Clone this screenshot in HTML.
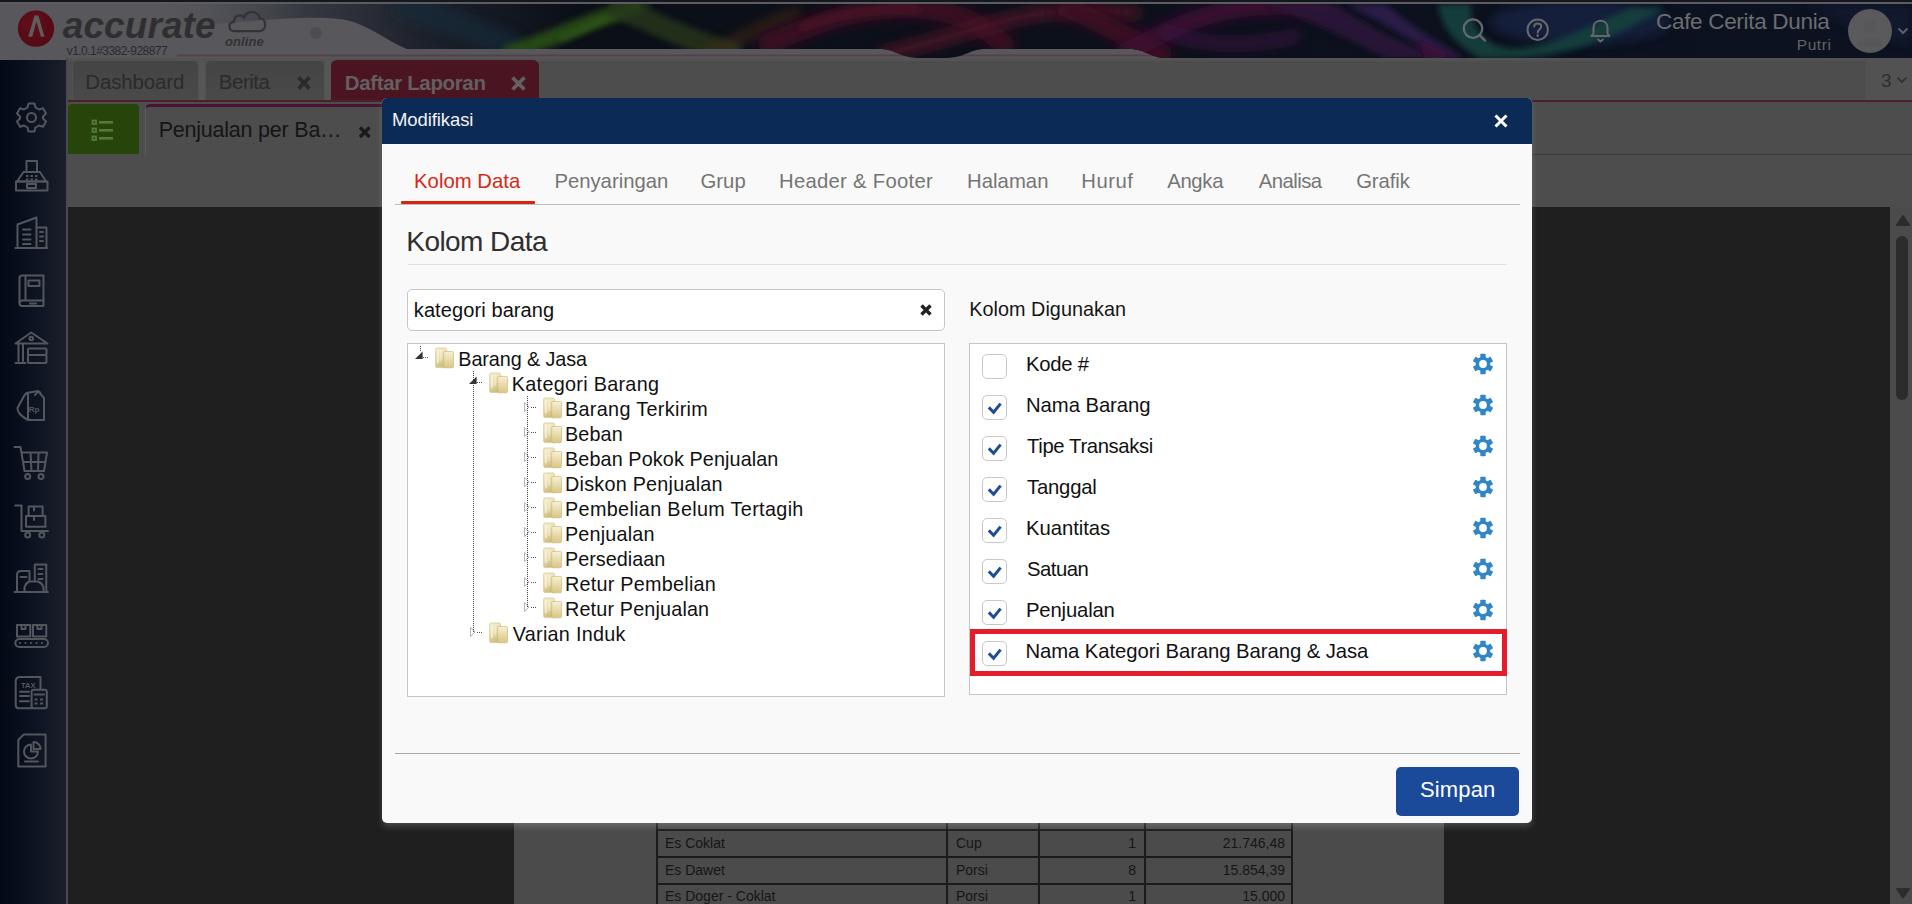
<!DOCTYPE html>
<html><head><meta charset="utf-8">
<style>
html,body{margin:0;padding:0;}
html{width:1912px;height:904px;overflow:hidden;background:#1f1f1f;}
body{width:1912px;height:904px;overflow:hidden;position:relative;background:#1f1f1f;font-family:"Liberation Sans",sans-serif;}
.a{position:absolute;}
.t{position:absolute;white-space:pre;line-height:1;}
</style></head><body>

<!-- HEADER -->
<svg class="a" style="left:0;top:0" width="1912" height="60" viewBox="0 0 1912 60">
 <defs>
  <linearGradient id="hdark" x1="0" x2="1912" y1="0" y2="0" gradientUnits="userSpaceOnUse">
   <stop offset="0.07" stop-color="#58585c" stop-opacity="0"/>
   <stop offset="0.16" stop-color="#2f323c" stop-opacity="0.85"/>
   <stop offset="0.22" stop-color="#1e222c"/>
   <stop offset="0.3" stop-color="#0b0f18"/>
   <stop offset="1" stop-color="#0c1220"/>
  </linearGradient>
  <filter id="bl3" x="-20%" y="-100%" width="140%" height="300%"><feGaussianBlur stdDeviation="3"/></filter>
  <filter id="bl6" x="-20%" y="-100%" width="140%" height="300%"><feGaussianBlur stdDeviation="6"/></filter>
  <clipPath id="hclip"><path d="M0 4 L1912 4 L1912 59 L1170 59 C1150 58 1145 49 1130 49 L985 49 C970 49 965 58 945 58 L920 58 C900 58 895 49 880 49 L407 49 C385 40 365 22 340 19 C300 15 250 22 160 28 L0 30Z"/></clipPath>
 </defs>
 <rect x="0" y="0" width="1912" height="60" fill="#4c4c4c"/>
 <rect x="0" y="0" width="1912" height="2" fill="#16161d"/>
 <rect x="0" y="2" width="1912" height="2" fill="#5c5c63"/>
 <rect x="0" y="4" width="1912" height="54" fill="#58585c"/>
 <rect x="0" y="56" width="66" height="4" fill="#58585c"/>
 <path d="M177 55.5 L1912 55.5" stroke="#55404a" stroke-width="2"/>
 <path d="M0 4 L1912 4 L1912 59 L1170 59 C1150 58 1145 49 1130 49 L985 49 C970 49 965 58 945 58 L920 58 C900 58 895 49 880 49 L407 49 C385 40 365 22 340 19 C300 15 250 22 160 28 L0 30Z" fill="url(#hdark)"/>
 <g clip-path="url(#hclip)">
  <!-- green wave -->
  <path d="M395 4 C430 12 470 30 520 50" stroke="#132a38" stroke-width="26" fill="none" filter="url(#bl6)" opacity="0.7"/>
  <path d="M505 54 C545 44 580 22 640 6" stroke="#294d17" stroke-width="16" fill="none" filter="url(#bl3)" opacity="0.9"/>
  <path d="M560 40 C590 28 610 14 650 5" stroke="#3a6a1c" stroke-width="4" fill="none" filter="url(#bl3)" opacity="0.7"/>
  <path d="M610 6 C650 18 690 44 740 54" stroke="#27351f" stroke-width="22" fill="none" filter="url(#bl3)" opacity="0.85"/>
  <path d="M700 58 C730 45 760 25 800 12" stroke="#4a2c16" stroke-width="10" fill="none" filter="url(#bl6)" opacity="0.7"/>
  <!-- red waves -->
  <path d="M760 48 C800 30 840 10 900 8 C960 6 990 30 1010 50" stroke="#3e0f22" stroke-width="20" fill="none" filter="url(#bl6)"/>
  <path d="M800 28 C840 12 880 8 920 10" stroke="#4e1428" stroke-width="6" fill="none" filter="url(#bl3)" opacity="0.9"/>
  <path d="M880 55 C930 45 980 25 1030 15 C1080 8 1110 10 1140 14" stroke="#4a1226" stroke-width="14" fill="none" filter="url(#bl6)" opacity="0.95"/>
  <path d="M1060 5 C1100 20 1130 40 1170 58" stroke="#3c0e22" stroke-width="20" fill="none" filter="url(#bl6)"/>
  <path d="M1120 55 C1160 35 1200 10 1260 6 C1290 4 1310 8 1330 12" stroke="#3e1030" stroke-width="18" fill="none" filter="url(#bl6)"/>
  <path d="M1160 30 C1200 45 1240 50 1300 35" stroke="#3a1240" stroke-width="10" fill="none" filter="url(#bl6)" opacity="0.9"/>
  <path d="M1265 4 L1335 4 C1360 20 1390 40 1445 58 L1385 58 C1350 40 1310 20 1265 4Z" fill="#2a1838" filter="url(#bl3)" opacity="0.95"/>
  <path d="M1345 4 L1385 4 C1410 25 1440 45 1465 58 L1440 58 C1410 40 1380 20 1345 4Z" fill="#2c1b46" filter="url(#bl3)"/>
  <path d="M1418 40 L1455 58 L1425 58Z" fill="#3e1034" filter="url(#bl3)"/>
  <ellipse cx="1580" cy="22" rx="90" ry="22" fill="#132040" filter="url(#bl6)" opacity="0.9"/>
  <path d="M1438 4 L1472 4 C1468 20 1480 42 1505 48 C1540 52 1580 30 1630 8 L1665 8 C1620 35 1570 58 1510 58 L1480 58 C1455 45 1440 25 1438 4Z" fill="#173f3e" filter="url(#bl3)" opacity="0.95"/>
  <path d="M1800 4 C1840 20 1880 40 1912 45 L1912 4Z" fill="#141c34" filter="url(#bl6)" opacity="0.7"/>
 </g>
</svg>
<!-- grey tab area -->
<div class="a" style="left:66px;top:58px;width:1846px;height:149px;background:#4c4c4c"></div>
<!-- sidebar -->
<div class="a" style="left:0;top:60px;width:66px;height:844px;background:linear-gradient(90deg,#030915 0%,#0d1422 55%,#1b1f2b 100%)"></div>
<div class="a" style="left:66px;top:58px;width:2px;height:846px;background:#4a4a4c"></div>



<!-- SIDEBAR ICONS -->
<svg class="a" style="left:0;top:90px" width="66" height="700" viewBox="0 90 66 700">
 <g fill="none" stroke="#53575d" stroke-width="2" stroke-linejoin="round" stroke-linecap="round">
  <!-- gear -->
  <path d="M28.5 103.5 L34.5 103.5 L35.5 107.5 L39 109.5 L43 108.3 L46 113.5 L43 116.5 L43 118.5 L46 121.5 L43 126.7 L39 125.5 L35.5 127.5 L34.5 131.5 L28.5 131.5 L27.5 127.5 L24 125.5 L20 126.7 L17 121.5 L20 118.5 L20 116.5 L17 113.5 L20 108.3 L24 109.5 L27.5 107.5Z"/>
  <circle cx="31.5" cy="117.5" r="4.5"/>
  <!-- cash register -->
  <rect x="26.5" y="161" width="10.5" height="11"/>
  <path d="M23.5 172 L40 172 L46 181.5 L17 181.5Z"/>
  <rect x="16" y="181.5" width="31.5" height="9"/>
  <rect x="27" y="184" width="9" height="4"/>
  <!-- building -->
  <path d="M15.5 248 L47 248"/>
  <path d="M17.5 248 L17.5 224.5 L36.5 217.5 L36.5 248"/>
  <path d="M36.5 227.5 L46.5 227.5 L46.5 248"/>
  <path d="M23 229.5 L30.5 229.5 M23 234.5 L30.5 234.5 M23 239.5 L30.5 239.5 M23 244 L30.5 244 M40 232 L43 232 M40 236.5 L43 236.5 M40 241 L43 241"/>
  <!-- book -->
  <path d="M22 275.5 L43.5 275.5 L43.5 306 L22 306 Q19.5 306 19.5 303 L19.5 278 Q19.5 275.5 22 275.5Z"/>
  <path d="M25.5 275.5 L25.5 300.5 L43.5 300.5 M19.5 303 Q19.5 300.5 22 300.5 L25.5 300.5"/>
  <rect x="28.5" y="280.5" width="11" height="5.5"/>
  <path d="M30 303.5 L36 303.5"/>
  <!-- bank -->
  <path d="M15.5 343.5 L31.2 332.5 L47.5 343.5Z"/>
  <circle cx="31.2" cy="338.5" r="1.8"/>
  <path d="M18.5 344 L18.5 361 M23 344 L23 361 M15.5 363 L25.5 363"/>
  <rect x="28" y="348.5" width="18.5" height="6.5" rx="1"/>
  <rect x="28" y="355" width="18.5" height="8" rx="1"/>
  <!-- tag Rp -->
  <path d="M26.5 393 L38 391 L44 398 L44 420 L28 420 Q17 414 17.5 408 L24 396Z"/>
  <path d="M28 394 L28 420"/>
  <path d="M35 395 Q39 389 41 394"/>
  <!-- cart -->
  <path d="M14.5 447 L20.5 447 L24.5 471 L44 471 M21.5 452.5 L47 452.5 L44 471 M22.8 462 L45.5 462 M30.5 452.5 L31.5 471 M38.5 452.5 L38 471"/>
  <circle cx="27.7" cy="476.5" r="2.5"/>
  <circle cx="41" cy="476.5" r="2.5"/>
  <!-- trolley -->
  <path d="M15.3 505.5 L21.5 505.5 L21.5 531 L48 531"/>
  <circle cx="27.7" cy="535" r="2.5"/><circle cx="41.8" cy="535" r="2.5"/>
  <rect x="28.6" y="506.5" width="14" height="9.5"/>
  <rect x="26" y="516" width="19.4" height="10.8"/>
  <path d="M34 506.5 L34 510.5 M34 516 L34 520"/>
  <!-- factory -->
  <path d="M14.5 592 L48 592"/>
  <path d="M17 592 L17 575 Q17 571 21 571 L29.5 571 L29.5 580"/>
  <path d="M34.8 580 L34.8 564.5 L46.3 564.5 L46.3 592"/>
  <path d="M20.5 577 L26.5 577 M38.5 569 L42.5 569 M38.5 574 L42.5 574 M38.5 579 L42.5 579"/>
  <path d="M24.5 592 L24.5 587 Q26 583 29 581.5 L38 581.5 Q42 583 43.5 587 L43.5 592"/>
  <!-- conveyor -->
  <rect x="17" y="625" width="13.3" height="11.5"/>
  <rect x="33" y="625" width="13.3" height="11.5"/>
  <path d="M21.5 625 L21.5 629 L25.5 629 L25.5 625 M37.5 625 L37.5 629 L41.5 629 L41.5 625"/>
  <rect x="15.3" y="639" width="32.7" height="8" rx="4"/>
  <!-- tax -->
  <path d="M20 677 L40.5 677 L40.5 689 M31.6 708.2 L19 708.2 Q15.7 708.2 15.7 705 L15.7 681.5 Q15.7 677 20 677"/>
  <path d="M20 691.7 L29 691.7 M20 696 L29 696 M20 701.2 L29 701.2"/>
  <rect x="31.6" y="689.8" width="15.2" height="18.4" rx="2"/>
  <path d="M34.5 694.5 L44 694.5"/>
  <!-- report -->
  <path d="M23.5 734.6 L45.6 734.6 L45.6 766.6 L18.3 766.6 L18.3 740Z"/>
  <path d="M31 744.5 A7 7 0 1 0 38 751.5 L31 751.5Z"/>
  <path d="M33.5 742 L33.5 749 L40.5 749 A7 7 0 0 0 33.5 742Z"/>
  <path d="M25 761.6 L38 761.6"/>
 </g>
 <g fill="#53575d">
  <rect x="26" y="175" width="2.4" height="2"/><rect x="30.5" y="175" width="2.4" height="2"/><rect x="35" y="175" width="2.4" height="2"/>
  <rect x="26" y="178.5" width="2.4" height="2"/><rect x="30.5" y="178.5" width="2.4" height="2"/><rect x="35" y="178.5" width="2.4" height="2"/>
  <circle cx="20" cy="643" r="1.1"/><circle cx="25.5" cy="643" r="1.1"/><circle cx="31" cy="643" r="1.1"/><circle cx="36.5" cy="643" r="1.1"/><circle cx="42" cy="643" r="1.1"/>
  <rect x="34.5" y="698.5" width="3" height="2"/><rect x="40" y="698.5" width="3" height="2"/><rect x="34.5" y="702.5" width="3" height="2"/><rect x="40" y="702.5" width="3" height="2"/>
 </g>
 <text x="28.7" y="411.5" font-family="Liberation Sans" font-weight="700" font-size="8" fill="#53575d">Rp</text>
 <text x="21" y="688" font-family="Liberation Sans" font-weight="700" font-size="7.5" fill="#53575d">TAX</text>
</svg>


<!-- LOGO -->
<svg class="a" style="left:0;top:0" width="340" height="60" viewBox="0 0 340 60">
 <defs><radialGradient id="lg" cx="0.4" cy="0.35" r="0.7"><stop offset="0" stop-color="#640e1b"/><stop offset="1" stop-color="#520a15"/></radialGradient></defs><circle cx="36" cy="28.6" r="18.2" fill="url(#lg)"/>
 <path d="M28.2 36.8 L34.6 15.6 L38.4 15.6 L44.4 36.8 L41 36.8 L36.4 21.5 L32.2 36.8Z" fill="#5e5e60"/>
 <path d="M9 21 C3 21 2.5 13 8.5 12.3 C8.5 6 15 4.5 18 8 C21 1 32 1.5 33 9 C40 9 40 21 33 21Z" transform="translate(225,9) scale(1.05)" fill="none" stroke="#333336" stroke-width="2.2"/>
 <ellipse cx="316" cy="33" rx="6" ry="6" fill="#4d4d50" opacity="0.9"/>
</svg>
<div class="t" style="left:62.8px;top:7.1px;font-size:37px;font-weight:700;font-style:italic;color:#2f2f31;letter-spacing:0.08px">accurate</div>
<div class="t" style="left:225.0px;top:35.3px;font-size:13px;font-weight:700;font-style:italic;color:#323234;letter-spacing:0.11px">online</div>
<div class="t" style="left:66.7px;top:44.8px;font-size:12px;color:#2a2a2c;letter-spacing:-0.54px">v1.0.1#3382-928877</div>

<!-- HEADER RIGHT -->
<svg class="a" style="left:1450px;top:10px" width="170" height="40" viewBox="1450 10 170 40">
 <g fill="none" stroke="#68686c" stroke-width="2.3" stroke-linecap="round">
 <circle cx="1473" cy="28.6" r="9.2"/>
 <path d="M1479.8 35.4 L1485 40.6"/>
 <circle cx="1537.7" cy="29.7" r="10.2" stroke-width="2"/>
 <path d="M1534.2 26.6 C1534.2 22.6 1541.2 22.6 1541.2 26.6 C1541.2 29.6 1537.7 29.6 1537.7 32.6" stroke-width="2"/>
 <path d="M1591.5 36 L1593.5 33.5 L1593.5 27.5 C1593.5 18.5 1607.5 18.5 1607.5 27.5 L1607.5 33.5 L1609.5 36Z" stroke-width="2" stroke-linejoin="round"/>
 <path d="M1598 39.5 L1600.5 41.5 L1603 39.5" stroke-width="1.8"/>
 </g>
 <circle cx="1537.7" cy="35.6" r="1.3" fill="#68686c"/>
</svg>
<svg class="a" style="left:1848px;top:9px" width="44" height="44" viewBox="0 0 44 44"><circle cx="22" cy="22" r="22" fill="#5a5a5c"/><circle cx="22" cy="17" r="6.5" fill="#575759"/><path d="M10 36 C10 26 34 26 34 36 L34 38 L10 38Z" fill="#575759"/></svg>
<svg class="a" style="left:1896px;top:26px" width="14" height="10" viewBox="0 0 14 10"><path d="M2.5 2.5 L7 7 L11.5 2.5" fill="none" stroke="#5d5f66" stroke-width="2"/></svg>
<div class="t" style="left:1656.0px;top:11.3px;font-size:22.5px;color:#6c6c70;letter-spacing:-0.31px">Cafe Cerita Dunia</div>
<div class="t" style="left:1796.8px;top:36.5px;font-size:15.5px;color:#636366;letter-spacing:0.54px">Putri</div>

<!-- TABS ROW -->
<div class="a" style="left:68px;top:58px;width:1844px;height:42px;background:#4d4d4d"></div>
<div class="a" style="left:199px;top:60px;width:6px;height:40px;background:#565656"></div><div class="a" style="left:325px;top:60px;width:6px;height:40px;background:#565656"></div><div class="a" style="left:68px;top:58px;width:1798px;height:3px;background:#535353"></div>
<div class="a" style="left:72px;top:60px;width:127px;height:41px;background:linear-gradient(#444,#4a4a4a);border:1px solid #525252;border-bottom:none;border-radius:6px 6px 0 0;box-sizing:border-box"></div>
<div class="a" style="left:205px;top:60px;width:120px;height:41px;background:linear-gradient(#444,#4a4a4a);border:1px solid #525252;border-bottom:none;border-radius:6px 6px 0 0;box-sizing:border-box"></div>
<div class="a" style="left:331px;top:60px;width:208px;height:41px;background:#4a1420;border-radius:6px 6px 0 0"></div>
<svg class="a" style="left:290px;top:70px" width="240" height="24" viewBox="290 70 240 24">
 <path d="M298.5 77.5 L309.5 88.5 M309.5 77.5 L298.5 88.5" stroke="#2a2a2a" stroke-width="3.6"/>
 <path d="M512.5 77.5 L524.5 89.5 M524.5 77.5 L512.5 89.5" stroke="#646062" stroke-width="3.8"/>
</svg>
<div class="a" style="left:68px;top:100px;width:1844px;height:2px;background:#4b2029"></div>
<div class="a" style="left:1866px;top:58px;width:46px;height:42px;background:#525252"></div>
<svg class="a" style="left:1896px;top:76px" width="12" height="8" viewBox="0 0 12 8"><path d="M1.5 1.5 L6 6 L10.5 1.5" fill="none" stroke="#2e2e2e" stroke-width="1.6"/></svg>
<div class="t" style="left:85.3px;top:71.6px;font-size:20.5px;color:#2b2b2b;letter-spacing:-0.15px">Dashboard</div>
<div class="t" style="left:218.8px;top:71.6px;font-size:20.5px;color:#2b2b2b;letter-spacing:-0.47px">Berita</div>
<div class="t" style="left:344.7px;top:72.5px;font-size:20.5px;font-weight:700;color:#645f61;letter-spacing:-0.35px">Daftar Laporan</div>
<div class="t" style="left:1881.0px;top:70.9px;font-size:19px;color:#2e2e2e">3</div>

<!-- second row -->
<div class="a" style="left:68px;top:102px;width:1844px;height:105px;background:#4d4d4d"></div>
<div class="a" style="left:68px;top:104px;width:71px;height:50px;background:#27450b;border-radius:4px 4px 0 0"></div>
<svg class="a" style="left:90px;top:117px" width="28" height="26" viewBox="0 0 28 26">
 <g fill="none" stroke="#557a38" stroke-width="1.8">
 <rect x="2.5" y="3.5" width="3.5" height="3.5"/><rect x="2.5" y="11.5" width="3.5" height="3.5"/><rect x="2.5" y="19.5" width="3.5" height="3.5"/>
 </g>
 <g fill="#557a38"><rect x="9" y="4" width="14" height="2.6"/><rect x="9" y="12" width="14" height="2.6"/><rect x="9" y="20" width="14" height="2.6"/></g>
</svg>
<div class="a" style="left:145px;top:104px;width:260px;height:51px;background:#4d4d4d;border-left:1px solid #5a5a5a;border-top:3px solid #4a1230;border-radius:5px 5px 0 0;box-sizing:border-box"></div>
<svg class="a" style="left:355px;top:122px" width="20" height="20" viewBox="355 122 20 20"><path d="M360 127.5 L369.5 137 M369.5 127.5 L360 137" stroke="#1a1a1a" stroke-width="3.2"/></svg>
<div class="a" style="left:1532px;top:154px;width:380px;height:1px;background:#3b3b3b"></div>
<div class="t" style="left:158.7px;top:119.8px;font-size:21.5px;color:#151515;letter-spacing:-0.22px">Penjualan per Ba…</div>

<!-- CONTENT -->
<div class="a" style="left:68px;top:207px;width:1822px;height:697px;background:#1f1f1f"></div>
<div class="a" style="left:514px;top:207px;width:930px;height:697px;background:#4b4b4b"></div>
<div class="a" style="left:1890px;top:207px;width:22px;height:697px;background:#4b4b4b"></div>
<svg class="a" style="left:1889px;top:210px" width="23" height="20" viewBox="1889 210 23 20"><path d="M1897 225 L1903 216 L1909 225Z" fill="#2c2c2c" stroke="#2c2c2c" stroke-width="2" stroke-linejoin="round"/></svg>
<div class="a" style="left:1896px;top:236px;width:12px;height:164px;background:#2c2c2c;border-radius:6px"></div>
<svg class="a" style="left:1889px;top:880px" width="23" height="20" viewBox="1889 880 23 20"><path d="M1897 889 L1903 897.5 L1909 889Z" fill="#2c2c2c" stroke="#2c2c2c" stroke-width="2" stroke-linejoin="round"/></svg>
<!-- TABLE -->
<div class="a" style="left:656px;top:820px;width:2px;height:84px;background:#1b1b1b"></div>
<div class="a" style="left:946px;top:820px;width:2px;height:84px;background:#1b1b1b"></div>
<div class="a" style="left:1038px;top:820px;width:2px;height:84px;background:#1b1b1b"></div>
<div class="a" style="left:1144px;top:820px;width:2px;height:84px;background:#1b1b1b"></div>
<div class="a" style="left:1291px;top:820px;width:2px;height:84px;background:#1b1b1b"></div>
<div class="a" style="left:656px;top:829px;width:637px;height:2px;background:#1b1b1b"></div>
<div class="a" style="left:656px;top:856px;width:637px;height:2px;background:#1b1b1b"></div>
<div class="a" style="left:656px;top:883px;width:637px;height:2px;background:#1b1b1b"></div>
<div class="t" style="left:665px;top:836.4px;font-size:14px;color:#151515">Es Coklat</div>
<div class="t" style="left:956px;top:836.4px;font-size:14px;color:#151515">Cup</div>
<div class="t" style="right:776px;top:836.4px;font-size:14px;color:#151515">1</div>
<div class="t" style="right:627px;top:836.4px;font-size:14px;color:#151515">21.746,48</div>
<div class="t" style="left:665px;top:862.8px;font-size:14px;color:#151515">Es Dawet</div>
<div class="t" style="left:956px;top:862.8px;font-size:14px;color:#151515">Porsi</div>
<div class="t" style="right:776px;top:862.8px;font-size:14px;color:#151515">8</div>
<div class="t" style="right:627px;top:862.8px;font-size:14px;color:#151515">15.854,39</div>
<div class="t" style="left:665px;top:889.1px;font-size:14px;color:#151515">Es Doger - Coklat</div>
<div class="t" style="left:956px;top:889.1px;font-size:14px;color:#151515">Porsi</div>
<div class="t" style="right:776px;top:889.1px;font-size:14px;color:#151515">1</div>
<div class="t" style="right:627px;top:889.1px;font-size:14px;color:#151515">15.000</div>

<!-- MODAL -->
<div class="a" style="left:382px;top:98px;width:1150px;height:725px;border-radius:5px;background:#f9f9f9;box-shadow:0 4px 7px -1px rgba(190,190,190,0.3);overflow:hidden">
 <div class="a" style="left:0;top:0;width:1150px;height:46px;background:#0b2a56"></div>
</div>
<svg class="a" style="left:1490px;top:110px" width="22" height="22" viewBox="1490 110 22 22"><path d="M1495.5 115.5 L1506.5 126.5 M1506.5 115.5 L1495.5 126.5" stroke="#fff" stroke-width="3"/></svg>
<div class="a" style="left:395px;top:204px;width:1125px;height:1px;background:#bdbdbd"></div>
<div class="a" style="left:401px;top:201px;width:134px;height:3px;background:#d8230e;border-radius:1px"></div>
<div class="a" style="left:408px;top:264px;width:1099px;height:1px;background:#e1e1e1"></div>
<div class="a" style="left:407px;top:289px;width:538px;height:42px;background:#fff;border:1px solid #c6c6c6;border-radius:5px;box-sizing:border-box"></div>
<svg class="a" style="left:915px;top:300px" width="20" height="20" viewBox="915 300 20 20"><path d="M921.5 305.5 L930.5 314.5 M930.5 305.5 L921.5 314.5" stroke="#222" stroke-width="3.4"/></svg>
<div class="a" style="left:407px;top:343px;width:538px;height:354px;background:#fff;border:1px solid #c6c6c6;box-sizing:border-box"></div>
<div class="a" style="left:969px;top:343px;width:538px;height:352px;background:#fff;border:1px solid #c6c6c6;box-sizing:border-box"></div>
<div class="a" style="left:395px;top:753px;width:1125px;height:1px;background:#a9a9a9"></div>
<div class="a" style="left:1396px;top:767px;width:123px;height:49px;background:#1b4a9a;border-radius:5px"></div>
<div class="t" style="left:392.0px;top:110.8px;font-size:18.5px;color:#f2f2f2;letter-spacing:-0.09px">Modifikasi</div>
<div class="t" style="left:414.0px;top:171.4px;font-size:20.3px;color:#d42a16;letter-spacing:0.04px">Kolom Data</div>
<div class="t" style="left:554.4px;top:171.4px;font-size:20.3px;color:#757575">Penyaringan</div>
<div class="t" style="left:700.5px;top:171.4px;font-size:20.3px;color:#757575;letter-spacing:0.03px">Grup</div>
<div class="t" style="left:779.0px;top:171.4px;font-size:20.3px;color:#757575;letter-spacing:0.27px">Header &amp; Footer</div>
<div class="t" style="left:967.0px;top:171.4px;font-size:20.3px;color:#757575;letter-spacing:0.05px">Halaman</div>
<div class="t" style="left:1081.3px;top:171.4px;font-size:20.3px;color:#757575;letter-spacing:0.51px">Huruf</div>
<div class="t" style="left:1167.2px;top:171.4px;font-size:20.3px;color:#757575;letter-spacing:-0.31px">Angka</div>
<div class="t" style="left:1258.8px;top:171.4px;font-size:20.3px;color:#757575;letter-spacing:-0.54px">Analisa</div>
<div class="t" style="left:1356.2px;top:171.4px;font-size:20.3px;color:#757575;letter-spacing:-0.09px">Grafik</div>
<div class="t" style="left:406.3px;top:228.3px;font-size:28px;color:#2f2f2f;letter-spacing:-0.56px">Kolom Data</div>
<div class="t" style="left:413.8px;top:299.9px;font-size:20px;color:#111;letter-spacing:0.10px">kategori barang</div>
<div class="t" style="left:969.3px;top:300.1px;font-size:19.8px;color:#151515;letter-spacing:0.04px">Kolom Digunakan</div>
<div class="t" style="left:1420.0px;top:779.4px;font-size:22px;color:#fff;letter-spacing:0.13px">Simpan</div>
<svg width="0" height="0" style="position:absolute"><defs><linearGradient id="fgB" x1="0" y1="0" x2="0.3" y2="1"><stop offset="0" stop-color="#f4edd2"/><stop offset="0.55" stop-color="#ebdfb0"/><stop offset="1" stop-color="#cfbd7c"/></linearGradient><linearGradient id="fgF" x1="0" y1="0" x2="0" y2="1"><stop offset="0" stop-color="#f7f0d4"/><stop offset="1" stop-color="#d9c684"/></linearGradient></defs></svg>
<svg class="a" style="left:434.5px;top:347.0px" width="20" height="22" viewBox="0 0 20 22"><path d="M0.6 2.6 Q0.6 1 2.2 1 L10 1 Q11.5 1 11.5 2.5 L11.5 20.6 L2.2 20.6 Q0.6 20.6 0.6 19Z" fill="url(#fgB)" stroke="#d6c68c" stroke-width="0.7"/><path d="M3 3 L3 16" stroke="#fbf8ea" stroke-width="1.4" opacity="0.8"/><path d="M6 3 L6 14" stroke="#fbf8ea" stroke-width="1" opacity="0.6"/><path d="M8.7 5.6 Q8.7 4.4 10 4.4 L17.2 4.4 Q18.5 4.4 18.5 5.7 L18.5 19.4 Q18.5 20.8 17.2 20.8 L10 20.8 Q8.7 20.8 8.7 19.4Z" fill="url(#fgF)" stroke="#cdb97a" stroke-width="0.7"/></svg>
<div class="t" style="left:458.3px;top:349.5px;font-size:19.8px;color:#111;letter-spacing:-0.09px">Barang &amp; Jasa</div>
<svg class="a" style="left:488.5px;top:372.0px" width="20" height="22" viewBox="0 0 20 22"><path d="M0.6 2.6 Q0.6 1 2.2 1 L10 1 Q11.5 1 11.5 2.5 L11.5 20.6 L2.2 20.6 Q0.6 20.6 0.6 19Z" fill="url(#fgB)" stroke="#d6c68c" stroke-width="0.7"/><path d="M3 3 L3 16" stroke="#fbf8ea" stroke-width="1.4" opacity="0.8"/><path d="M6 3 L6 14" stroke="#fbf8ea" stroke-width="1" opacity="0.6"/><path d="M8.7 5.6 Q8.7 4.4 10 4.4 L17.2 4.4 Q18.5 4.4 18.5 5.7 L18.5 19.4 Q18.5 20.8 17.2 20.8 L10 20.8 Q8.7 20.8 8.7 19.4Z" fill="url(#fgF)" stroke="#cdb97a" stroke-width="0.7"/></svg>
<div class="t" style="left:511.8px;top:374.5px;font-size:19.8px;color:#111;letter-spacing:0.30px">Kategori Barang</div>
<svg class="a" style="left:542.5px;top:397.0px" width="20" height="22" viewBox="0 0 20 22"><path d="M0.6 2.6 Q0.6 1 2.2 1 L10 1 Q11.5 1 11.5 2.5 L11.5 20.6 L2.2 20.6 Q0.6 20.6 0.6 19Z" fill="url(#fgB)" stroke="#d6c68c" stroke-width="0.7"/><path d="M3 3 L3 16" stroke="#fbf8ea" stroke-width="1.4" opacity="0.8"/><path d="M6 3 L6 14" stroke="#fbf8ea" stroke-width="1" opacity="0.6"/><path d="M8.7 5.6 Q8.7 4.4 10 4.4 L17.2 4.4 Q18.5 4.4 18.5 5.7 L18.5 19.4 Q18.5 20.8 17.2 20.8 L10 20.8 Q8.7 20.8 8.7 19.4Z" fill="url(#fgF)" stroke="#cdb97a" stroke-width="0.7"/></svg>
<div class="t" style="left:565.0px;top:399.5px;font-size:19.8px;color:#111;letter-spacing:0.33px">Barang Terkirim</div>
<svg class="a" style="left:542.5px;top:422.0px" width="20" height="22" viewBox="0 0 20 22"><path d="M0.6 2.6 Q0.6 1 2.2 1 L10 1 Q11.5 1 11.5 2.5 L11.5 20.6 L2.2 20.6 Q0.6 20.6 0.6 19Z" fill="url(#fgB)" stroke="#d6c68c" stroke-width="0.7"/><path d="M3 3 L3 16" stroke="#fbf8ea" stroke-width="1.4" opacity="0.8"/><path d="M6 3 L6 14" stroke="#fbf8ea" stroke-width="1" opacity="0.6"/><path d="M8.7 5.6 Q8.7 4.4 10 4.4 L17.2 4.4 Q18.5 4.4 18.5 5.7 L18.5 19.4 Q18.5 20.8 17.2 20.8 L10 20.8 Q8.7 20.8 8.7 19.4Z" fill="url(#fgF)" stroke="#cdb97a" stroke-width="0.7"/></svg>
<div class="t" style="left:565.0px;top:424.5px;font-size:19.8px;color:#111;letter-spacing:0.13px">Beban</div>
<svg class="a" style="left:542.5px;top:447.0px" width="20" height="22" viewBox="0 0 20 22"><path d="M0.6 2.6 Q0.6 1 2.2 1 L10 1 Q11.5 1 11.5 2.5 L11.5 20.6 L2.2 20.6 Q0.6 20.6 0.6 19Z" fill="url(#fgB)" stroke="#d6c68c" stroke-width="0.7"/><path d="M3 3 L3 16" stroke="#fbf8ea" stroke-width="1.4" opacity="0.8"/><path d="M6 3 L6 14" stroke="#fbf8ea" stroke-width="1" opacity="0.6"/><path d="M8.7 5.6 Q8.7 4.4 10 4.4 L17.2 4.4 Q18.5 4.4 18.5 5.7 L18.5 19.4 Q18.5 20.8 17.2 20.8 L10 20.8 Q8.7 20.8 8.7 19.4Z" fill="url(#fgF)" stroke="#cdb97a" stroke-width="0.7"/></svg>
<div class="t" style="left:565.0px;top:449.5px;font-size:19.8px;color:#111;letter-spacing:0.11px">Beban Pokok Penjualan</div>
<svg class="a" style="left:542.5px;top:472.0px" width="20" height="22" viewBox="0 0 20 22"><path d="M0.6 2.6 Q0.6 1 2.2 1 L10 1 Q11.5 1 11.5 2.5 L11.5 20.6 L2.2 20.6 Q0.6 20.6 0.6 19Z" fill="url(#fgB)" stroke="#d6c68c" stroke-width="0.7"/><path d="M3 3 L3 16" stroke="#fbf8ea" stroke-width="1.4" opacity="0.8"/><path d="M6 3 L6 14" stroke="#fbf8ea" stroke-width="1" opacity="0.6"/><path d="M8.7 5.6 Q8.7 4.4 10 4.4 L17.2 4.4 Q18.5 4.4 18.5 5.7 L18.5 19.4 Q18.5 20.8 17.2 20.8 L10 20.8 Q8.7 20.8 8.7 19.4Z" fill="url(#fgF)" stroke="#cdb97a" stroke-width="0.7"/></svg>
<div class="t" style="left:565.0px;top:474.5px;font-size:19.8px;color:#111;letter-spacing:0.24px">Diskon Penjualan</div>
<svg class="a" style="left:542.5px;top:497.0px" width="20" height="22" viewBox="0 0 20 22"><path d="M0.6 2.6 Q0.6 1 2.2 1 L10 1 Q11.5 1 11.5 2.5 L11.5 20.6 L2.2 20.6 Q0.6 20.6 0.6 19Z" fill="url(#fgB)" stroke="#d6c68c" stroke-width="0.7"/><path d="M3 3 L3 16" stroke="#fbf8ea" stroke-width="1.4" opacity="0.8"/><path d="M6 3 L6 14" stroke="#fbf8ea" stroke-width="1" opacity="0.6"/><path d="M8.7 5.6 Q8.7 4.4 10 4.4 L17.2 4.4 Q18.5 4.4 18.5 5.7 L18.5 19.4 Q18.5 20.8 17.2 20.8 L10 20.8 Q8.7 20.8 8.7 19.4Z" fill="url(#fgF)" stroke="#cdb97a" stroke-width="0.7"/></svg>
<div class="t" style="left:565.0px;top:499.5px;font-size:19.8px;color:#111;letter-spacing:0.34px">Pembelian Belum Tertagih</div>
<svg class="a" style="left:542.5px;top:522.0px" width="20" height="22" viewBox="0 0 20 22"><path d="M0.6 2.6 Q0.6 1 2.2 1 L10 1 Q11.5 1 11.5 2.5 L11.5 20.6 L2.2 20.6 Q0.6 20.6 0.6 19Z" fill="url(#fgB)" stroke="#d6c68c" stroke-width="0.7"/><path d="M3 3 L3 16" stroke="#fbf8ea" stroke-width="1.4" opacity="0.8"/><path d="M6 3 L6 14" stroke="#fbf8ea" stroke-width="1" opacity="0.6"/><path d="M8.7 5.6 Q8.7 4.4 10 4.4 L17.2 4.4 Q18.5 4.4 18.5 5.7 L18.5 19.4 Q18.5 20.8 17.2 20.8 L10 20.8 Q8.7 20.8 8.7 19.4Z" fill="url(#fgF)" stroke="#cdb97a" stroke-width="0.7"/></svg>
<div class="t" style="left:565.0px;top:524.5px;font-size:19.8px;color:#111;letter-spacing:0.18px">Penjualan</div>
<svg class="a" style="left:542.5px;top:547.0px" width="20" height="22" viewBox="0 0 20 22"><path d="M0.6 2.6 Q0.6 1 2.2 1 L10 1 Q11.5 1 11.5 2.5 L11.5 20.6 L2.2 20.6 Q0.6 20.6 0.6 19Z" fill="url(#fgB)" stroke="#d6c68c" stroke-width="0.7"/><path d="M3 3 L3 16" stroke="#fbf8ea" stroke-width="1.4" opacity="0.8"/><path d="M6 3 L6 14" stroke="#fbf8ea" stroke-width="1" opacity="0.6"/><path d="M8.7 5.6 Q8.7 4.4 10 4.4 L17.2 4.4 Q18.5 4.4 18.5 5.7 L18.5 19.4 Q18.5 20.8 17.2 20.8 L10 20.8 Q8.7 20.8 8.7 19.4Z" fill="url(#fgF)" stroke="#cdb97a" stroke-width="0.7"/></svg>
<div class="t" style="left:565.0px;top:549.5px;font-size:19.8px;color:#111;letter-spacing:0.01px">Persediaan</div>
<svg class="a" style="left:542.5px;top:572.0px" width="20" height="22" viewBox="0 0 20 22"><path d="M0.6 2.6 Q0.6 1 2.2 1 L10 1 Q11.5 1 11.5 2.5 L11.5 20.6 L2.2 20.6 Q0.6 20.6 0.6 19Z" fill="url(#fgB)" stroke="#d6c68c" stroke-width="0.7"/><path d="M3 3 L3 16" stroke="#fbf8ea" stroke-width="1.4" opacity="0.8"/><path d="M6 3 L6 14" stroke="#fbf8ea" stroke-width="1" opacity="0.6"/><path d="M8.7 5.6 Q8.7 4.4 10 4.4 L17.2 4.4 Q18.5 4.4 18.5 5.7 L18.5 19.4 Q18.5 20.8 17.2 20.8 L10 20.8 Q8.7 20.8 8.7 19.4Z" fill="url(#fgF)" stroke="#cdb97a" stroke-width="0.7"/></svg>
<div class="t" style="left:565.0px;top:574.5px;font-size:19.8px;color:#111;letter-spacing:0.25px">Retur Pembelian</div>
<svg class="a" style="left:542.5px;top:597.0px" width="20" height="22" viewBox="0 0 20 22"><path d="M0.6 2.6 Q0.6 1 2.2 1 L10 1 Q11.5 1 11.5 2.5 L11.5 20.6 L2.2 20.6 Q0.6 20.6 0.6 19Z" fill="url(#fgB)" stroke="#d6c68c" stroke-width="0.7"/><path d="M3 3 L3 16" stroke="#fbf8ea" stroke-width="1.4" opacity="0.8"/><path d="M6 3 L6 14" stroke="#fbf8ea" stroke-width="1" opacity="0.6"/><path d="M8.7 5.6 Q8.7 4.4 10 4.4 L17.2 4.4 Q18.5 4.4 18.5 5.7 L18.5 19.4 Q18.5 20.8 17.2 20.8 L10 20.8 Q8.7 20.8 8.7 19.4Z" fill="url(#fgF)" stroke="#cdb97a" stroke-width="0.7"/></svg>
<div class="t" style="left:565.0px;top:599.5px;font-size:19.8px;color:#111;letter-spacing:0.16px">Retur Penjualan</div>
<svg class="a" style="left:488.5px;top:622.0px" width="20" height="22" viewBox="0 0 20 22"><path d="M0.6 2.6 Q0.6 1 2.2 1 L10 1 Q11.5 1 11.5 2.5 L11.5 20.6 L2.2 20.6 Q0.6 20.6 0.6 19Z" fill="url(#fgB)" stroke="#d6c68c" stroke-width="0.7"/><path d="M3 3 L3 16" stroke="#fbf8ea" stroke-width="1.4" opacity="0.8"/><path d="M6 3 L6 14" stroke="#fbf8ea" stroke-width="1" opacity="0.6"/><path d="M8.7 5.6 Q8.7 4.4 10 4.4 L17.2 4.4 Q18.5 4.4 18.5 5.7 L18.5 19.4 Q18.5 20.8 17.2 20.8 L10 20.8 Q8.7 20.8 8.7 19.4Z" fill="url(#fgF)" stroke="#cdb97a" stroke-width="0.7"/></svg>
<div class="t" style="left:512.8px;top:624.5px;font-size:19.8px;color:#111;letter-spacing:0.27px">Varian Induk</div>
<svg class="a" style="left:408px;top:344px" width="200" height="300" viewBox="408 344 200 300"><path d="M415 358.9 L422.6 351.4 L422.6 358.9Z" fill="#333"/><path d="M423 357.5 L429 357.5" stroke="#555" stroke-width="1" stroke-dasharray="1 1"/><path d="M469 383.9 L476.6 376.4 L476.6 383.9Z" fill="#333"/><path d="M477 382.5 L483 382.5" stroke="#555" stroke-width="1" stroke-dasharray="1 1"/><path d="M524.5 402.4 L529 407.0 L524.5 411.6Z" fill="#fff" stroke="#b5b5b5" stroke-width="1"/><path d="M531 407.5 L537 407.5" stroke="#555" stroke-width="1" stroke-dasharray="1 1"/><path d="M524.5 427.4 L529 432.0 L524.5 436.6Z" fill="#fff" stroke="#b5b5b5" stroke-width="1"/><path d="M531 432.5 L537 432.5" stroke="#555" stroke-width="1" stroke-dasharray="1 1"/><path d="M524.5 452.4 L529 457.0 L524.5 461.6Z" fill="#fff" stroke="#b5b5b5" stroke-width="1"/><path d="M531 457.5 L537 457.5" stroke="#555" stroke-width="1" stroke-dasharray="1 1"/><path d="M524.5 477.4 L529 482.0 L524.5 486.6Z" fill="#fff" stroke="#b5b5b5" stroke-width="1"/><path d="M531 482.5 L537 482.5" stroke="#555" stroke-width="1" stroke-dasharray="1 1"/><path d="M524.5 502.4 L529 507.0 L524.5 511.6Z" fill="#fff" stroke="#b5b5b5" stroke-width="1"/><path d="M531 507.5 L537 507.5" stroke="#555" stroke-width="1" stroke-dasharray="1 1"/><path d="M524.5 527.4 L529 532.0 L524.5 536.6Z" fill="#fff" stroke="#b5b5b5" stroke-width="1"/><path d="M531 532.5 L537 532.5" stroke="#555" stroke-width="1" stroke-dasharray="1 1"/><path d="M524.5 552.4 L529 557.0 L524.5 561.6Z" fill="#fff" stroke="#b5b5b5" stroke-width="1"/><path d="M531 557.5 L537 557.5" stroke="#555" stroke-width="1" stroke-dasharray="1 1"/><path d="M524.5 577.4 L529 582.0 L524.5 586.6Z" fill="#fff" stroke="#b5b5b5" stroke-width="1"/><path d="M531 582.5 L537 582.5" stroke="#555" stroke-width="1" stroke-dasharray="1 1"/><path d="M524.5 602.4 L529 607.0 L524.5 611.6Z" fill="#fff" stroke="#b5b5b5" stroke-width="1"/><path d="M531 607.5 L537 607.5" stroke="#555" stroke-width="1" stroke-dasharray="1 1"/><path d="M470.5 627.4 L475 632.0 L470.5 636.6Z" fill="#fff" stroke="#b5b5b5" stroke-width="1"/><path d="M477 632.5 L483 632.5" stroke="#555" stroke-width="1" stroke-dasharray="1 1"/><path d="M420.5 346 L420.5 352" stroke="#444" stroke-width="1" stroke-dasharray="1 1"/><path d="M473.5 371 L473.5 632" stroke="#444" stroke-width="1" stroke-dasharray="1 1"/><path d="M527.5 396 L527.5 607" stroke="#444" stroke-width="1" stroke-dasharray="1 1"/></svg>
<div class="a" style="left:982px;top:354px;width:25px;height:25px;border:1px solid #c8c8c8;border-radius:5px;box-sizing:border-box;background:#fff"></div>
<div class="t" style="left:1026.0px;top:353.8px;font-size:20.3px;color:#111;letter-spacing:-0.26px">Kode #</div>
<svg class="a" style="left:1472px;top:353px" width="22" height="22" viewBox="-11 -11 22 22"><g fill="#2f86c9"><circle r="7.3"/><rect x="-2.7" y="-10.2" width="5.4" height="5" rx="0.8" transform="rotate(0)"/><rect x="-2.7" y="-10.2" width="5.4" height="5" rx="0.8" transform="rotate(60)"/><rect x="-2.7" y="-10.2" width="5.4" height="5" rx="0.8" transform="rotate(120)"/><rect x="-2.7" y="-10.2" width="5.4" height="5" rx="0.8" transform="rotate(180)"/><rect x="-2.7" y="-10.2" width="5.4" height="5" rx="0.8" transform="rotate(240)"/><rect x="-2.7" y="-10.2" width="5.4" height="5" rx="0.8" transform="rotate(300)"/></g><circle r="3.9" fill="#fff"/></svg>
<div class="a" style="left:982px;top:395px;width:25px;height:25px;border:1px solid #c8c8c8;border-radius:5px;box-sizing:border-box;background:#fff"></div>
<svg class="a" style="left:982px;top:395px" width="25" height="25" viewBox="0 0 25 25"><path d="M6.8 12.4 L11.6 17.2 L18.6 8.6" fill="none" stroke="#1d4e95" stroke-width="3"/></svg>
<div class="t" style="left:1026.0px;top:394.8px;font-size:20.3px;color:#111;letter-spacing:-0.06px">Nama Barang</div>
<svg class="a" style="left:1472px;top:394px" width="22" height="22" viewBox="-11 -11 22 22"><g fill="#2f86c9"><circle r="7.3"/><rect x="-2.7" y="-10.2" width="5.4" height="5" rx="0.8" transform="rotate(0)"/><rect x="-2.7" y="-10.2" width="5.4" height="5" rx="0.8" transform="rotate(60)"/><rect x="-2.7" y="-10.2" width="5.4" height="5" rx="0.8" transform="rotate(120)"/><rect x="-2.7" y="-10.2" width="5.4" height="5" rx="0.8" transform="rotate(180)"/><rect x="-2.7" y="-10.2" width="5.4" height="5" rx="0.8" transform="rotate(240)"/><rect x="-2.7" y="-10.2" width="5.4" height="5" rx="0.8" transform="rotate(300)"/></g><circle r="3.9" fill="#fff"/></svg>
<div class="a" style="left:982px;top:436px;width:25px;height:25px;border:1px solid #c8c8c8;border-radius:5px;box-sizing:border-box;background:#fff"></div>
<svg class="a" style="left:982px;top:436px" width="25" height="25" viewBox="0 0 25 25"><path d="M6.8 12.4 L11.6 17.2 L18.6 8.6" fill="none" stroke="#1d4e95" stroke-width="3"/></svg>
<div class="t" style="left:1027.0px;top:435.8px;font-size:20.3px;color:#111;letter-spacing:-0.37px">Tipe Transaksi</div>
<svg class="a" style="left:1472px;top:435px" width="22" height="22" viewBox="-11 -11 22 22"><g fill="#2f86c9"><circle r="7.3"/><rect x="-2.7" y="-10.2" width="5.4" height="5" rx="0.8" transform="rotate(0)"/><rect x="-2.7" y="-10.2" width="5.4" height="5" rx="0.8" transform="rotate(60)"/><rect x="-2.7" y="-10.2" width="5.4" height="5" rx="0.8" transform="rotate(120)"/><rect x="-2.7" y="-10.2" width="5.4" height="5" rx="0.8" transform="rotate(180)"/><rect x="-2.7" y="-10.2" width="5.4" height="5" rx="0.8" transform="rotate(240)"/><rect x="-2.7" y="-10.2" width="5.4" height="5" rx="0.8" transform="rotate(300)"/></g><circle r="3.9" fill="#fff"/></svg>
<div class="a" style="left:982px;top:477px;width:25px;height:25px;border:1px solid #c8c8c8;border-radius:5px;box-sizing:border-box;background:#fff"></div>
<svg class="a" style="left:982px;top:477px" width="25" height="25" viewBox="0 0 25 25"><path d="M6.8 12.4 L11.6 17.2 L18.6 8.6" fill="none" stroke="#1d4e95" stroke-width="3"/></svg>
<div class="t" style="left:1027.0px;top:476.8px;font-size:20.3px;color:#111;letter-spacing:-0.21px">Tanggal</div>
<svg class="a" style="left:1472px;top:476px" width="22" height="22" viewBox="-11 -11 22 22"><g fill="#2f86c9"><circle r="7.3"/><rect x="-2.7" y="-10.2" width="5.4" height="5" rx="0.8" transform="rotate(0)"/><rect x="-2.7" y="-10.2" width="5.4" height="5" rx="0.8" transform="rotate(60)"/><rect x="-2.7" y="-10.2" width="5.4" height="5" rx="0.8" transform="rotate(120)"/><rect x="-2.7" y="-10.2" width="5.4" height="5" rx="0.8" transform="rotate(180)"/><rect x="-2.7" y="-10.2" width="5.4" height="5" rx="0.8" transform="rotate(240)"/><rect x="-2.7" y="-10.2" width="5.4" height="5" rx="0.8" transform="rotate(300)"/></g><circle r="3.9" fill="#fff"/></svg>
<div class="a" style="left:982px;top:518px;width:25px;height:25px;border:1px solid #c8c8c8;border-radius:5px;box-sizing:border-box;background:#fff"></div>
<svg class="a" style="left:982px;top:518px" width="25" height="25" viewBox="0 0 25 25"><path d="M6.8 12.4 L11.6 17.2 L18.6 8.6" fill="none" stroke="#1d4e95" stroke-width="3"/></svg>
<div class="t" style="left:1026.0px;top:517.8px;font-size:20.3px;color:#111;letter-spacing:-0.05px">Kuantitas</div>
<svg class="a" style="left:1472px;top:517px" width="22" height="22" viewBox="-11 -11 22 22"><g fill="#2f86c9"><circle r="7.3"/><rect x="-2.7" y="-10.2" width="5.4" height="5" rx="0.8" transform="rotate(0)"/><rect x="-2.7" y="-10.2" width="5.4" height="5" rx="0.8" transform="rotate(60)"/><rect x="-2.7" y="-10.2" width="5.4" height="5" rx="0.8" transform="rotate(120)"/><rect x="-2.7" y="-10.2" width="5.4" height="5" rx="0.8" transform="rotate(180)"/><rect x="-2.7" y="-10.2" width="5.4" height="5" rx="0.8" transform="rotate(240)"/><rect x="-2.7" y="-10.2" width="5.4" height="5" rx="0.8" transform="rotate(300)"/></g><circle r="3.9" fill="#fff"/></svg>
<div class="a" style="left:982px;top:559px;width:25px;height:25px;border:1px solid #c8c8c8;border-radius:5px;box-sizing:border-box;background:#fff"></div>
<svg class="a" style="left:982px;top:559px" width="25" height="25" viewBox="0 0 25 25"><path d="M6.8 12.4 L11.6 17.2 L18.6 8.6" fill="none" stroke="#1d4e95" stroke-width="3"/></svg>
<div class="t" style="left:1027.0px;top:558.8px;font-size:20.3px;color:#111;letter-spacing:-0.52px">Satuan</div>
<svg class="a" style="left:1472px;top:558px" width="22" height="22" viewBox="-11 -11 22 22"><g fill="#2f86c9"><circle r="7.3"/><rect x="-2.7" y="-10.2" width="5.4" height="5" rx="0.8" transform="rotate(0)"/><rect x="-2.7" y="-10.2" width="5.4" height="5" rx="0.8" transform="rotate(60)"/><rect x="-2.7" y="-10.2" width="5.4" height="5" rx="0.8" transform="rotate(120)"/><rect x="-2.7" y="-10.2" width="5.4" height="5" rx="0.8" transform="rotate(180)"/><rect x="-2.7" y="-10.2" width="5.4" height="5" rx="0.8" transform="rotate(240)"/><rect x="-2.7" y="-10.2" width="5.4" height="5" rx="0.8" transform="rotate(300)"/></g><circle r="3.9" fill="#fff"/></svg>
<div class="a" style="left:982px;top:600px;width:25px;height:25px;border:1px solid #c8c8c8;border-radius:5px;box-sizing:border-box;background:#fff"></div>
<svg class="a" style="left:982px;top:600px" width="25" height="25" viewBox="0 0 25 25"><path d="M6.8 12.4 L11.6 17.2 L18.6 8.6" fill="none" stroke="#1d4e95" stroke-width="3"/></svg>
<div class="t" style="left:1026.0px;top:599.8px;font-size:20.3px;color:#111;letter-spacing:-0.17px">Penjualan</div>
<svg class="a" style="left:1472px;top:599px" width="22" height="22" viewBox="-11 -11 22 22"><g fill="#2f86c9"><circle r="7.3"/><rect x="-2.7" y="-10.2" width="5.4" height="5" rx="0.8" transform="rotate(0)"/><rect x="-2.7" y="-10.2" width="5.4" height="5" rx="0.8" transform="rotate(60)"/><rect x="-2.7" y="-10.2" width="5.4" height="5" rx="0.8" transform="rotate(120)"/><rect x="-2.7" y="-10.2" width="5.4" height="5" rx="0.8" transform="rotate(180)"/><rect x="-2.7" y="-10.2" width="5.4" height="5" rx="0.8" transform="rotate(240)"/><rect x="-2.7" y="-10.2" width="5.4" height="5" rx="0.8" transform="rotate(300)"/></g><circle r="3.9" fill="#fff"/></svg>
<div class="a" style="left:982px;top:641px;width:25px;height:25px;border:1px solid #c8c8c8;border-radius:5px;box-sizing:border-box;background:#fff"></div>
<svg class="a" style="left:982px;top:641px" width="25" height="25" viewBox="0 0 25 25"><path d="M6.8 12.4 L11.6 17.2 L18.6 8.6" fill="none" stroke="#1d4e95" stroke-width="3"/></svg>
<div class="t" style="left:1025.4px;top:640.8px;font-size:20.3px;color:#111;letter-spacing:-0.06px">Nama Kategori Barang Barang &amp; Jasa</div>
<svg class="a" style="left:1472px;top:640px" width="22" height="22" viewBox="-11 -11 22 22"><g fill="#2f86c9"><circle r="7.3"/><rect x="-2.7" y="-10.2" width="5.4" height="5" rx="0.8" transform="rotate(0)"/><rect x="-2.7" y="-10.2" width="5.4" height="5" rx="0.8" transform="rotate(60)"/><rect x="-2.7" y="-10.2" width="5.4" height="5" rx="0.8" transform="rotate(120)"/><rect x="-2.7" y="-10.2" width="5.4" height="5" rx="0.8" transform="rotate(180)"/><rect x="-2.7" y="-10.2" width="5.4" height="5" rx="0.8" transform="rotate(240)"/><rect x="-2.7" y="-10.2" width="5.4" height="5" rx="0.8" transform="rotate(300)"/></g><circle r="3.9" fill="#fff"/></svg>
<div class="a" style="left:970px;top:629px;width:537px;height:47px;border:5px solid #e41d2a;box-sizing:border-box"></div>

</body></html>
